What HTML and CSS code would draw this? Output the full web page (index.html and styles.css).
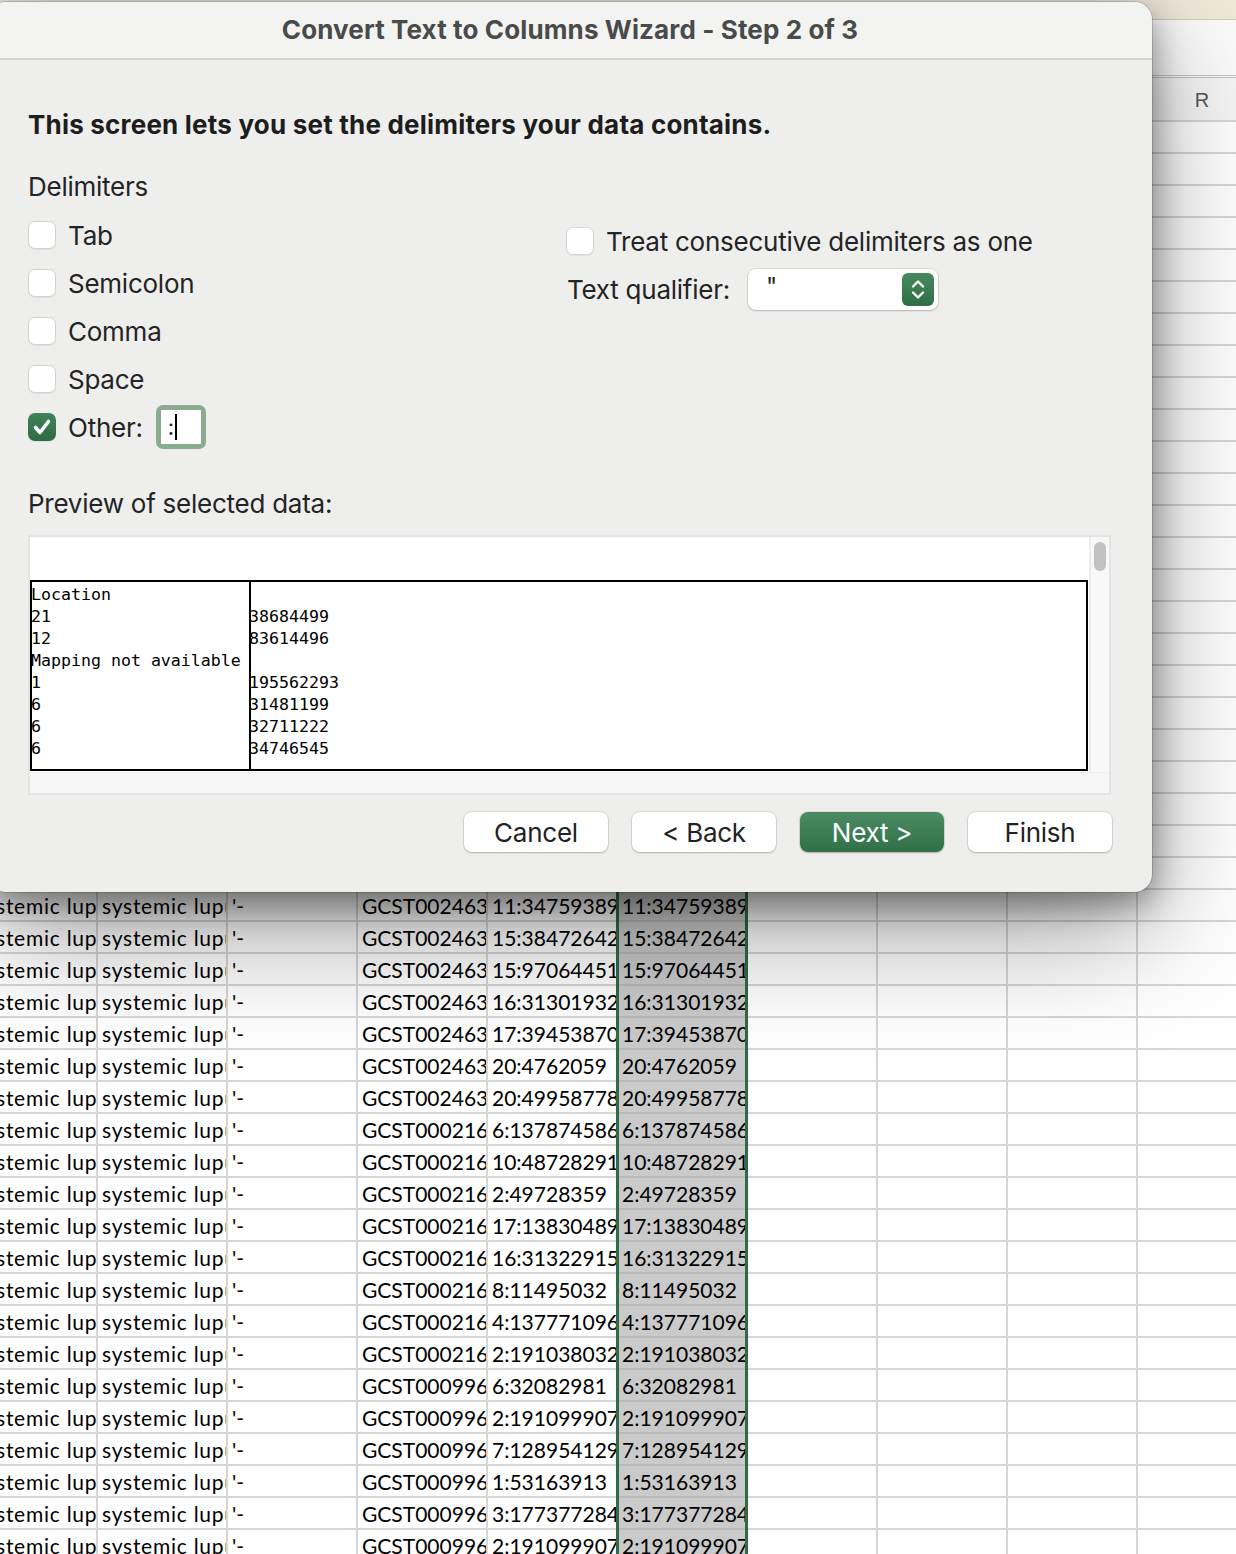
FILE: index.html
```html
<!DOCTYPE html>
<html lang="en">
<head>
<meta charset="utf-8">
<title>Convert Text to Columns Wizard</title>
<link rel="stylesheet" href="styles.css">
</head>
<body>
<div class="app">
  <div class="ribbon"></div>
  <div class="formula"></div>
  <div class="colhdr">
    <span>I</span><span>J</span><span>K</span><span>L</span><span>M</span><span>N</span><span>O</span><span>P</span><span>Q</span><span>R</span>
  </div>
  <div class="sheet">
    <div class="rows-hidden"></div>
    <div class="row"><span>systemic lupus erythematosus</span><span>systemic lupus erythematosus</span><span>'-</span><span>GCST002463</span><span>11:34759389</span><span class="sel">11:34759389</span></div>
    <div class="row"><span>systemic lupus erythematosus</span><span>systemic lupus erythematosus</span><span>'-</span><span>GCST002463</span><span>15:38472642</span><span class="sel">15:38472642</span></div>
    <div class="row"><span>systemic lupus erythematosus</span><span>systemic lupus erythematosus</span><span>'-</span><span>GCST002463</span><span>15:97064451</span><span class="sel">15:97064451</span></div>
    <div class="row"><span>systemic lupus erythematosus</span><span>systemic lupus erythematosus</span><span>'-</span><span>GCST002463</span><span>16:31301932</span><span class="sel">16:31301932</span></div>
    <div class="row"><span>systemic lupus erythematosus</span><span>systemic lupus erythematosus</span><span>'-</span><span>GCST002463</span><span>17:39453870</span><span class="sel">17:39453870</span></div>
    <div class="row"><span>systemic lupus erythematosus</span><span>systemic lupus erythematosus</span><span>'-</span><span>GCST002463</span><span>20:4762059</span><span class="sel">20:4762059</span></div>
    <div class="row"><span>systemic lupus erythematosus</span><span>systemic lupus erythematosus</span><span>'-</span><span>GCST002463</span><span>20:49958778</span><span class="sel">20:49958778</span></div>
    <div class="row"><span>systemic lupus erythematosus</span><span>systemic lupus erythematosus</span><span>'-</span><span>GCST000216</span><span>6:137874586</span><span class="sel">6:137874586</span></div>
    <div class="row"><span>systemic lupus erythematosus</span><span>systemic lupus erythematosus</span><span>'-</span><span>GCST000216</span><span>10:48728291</span><span class="sel">10:48728291</span></div>
    <div class="row"><span>systemic lupus erythematosus</span><span>systemic lupus erythematosus</span><span>'-</span><span>GCST000216</span><span>2:49728359</span><span class="sel">2:49728359</span></div>
    <div class="row"><span>systemic lupus erythematosus</span><span>systemic lupus erythematosus</span><span>'-</span><span>GCST000216</span><span>17:13830489</span><span class="sel">17:13830489</span></div>
    <div class="row"><span>systemic lupus erythematosus</span><span>systemic lupus erythematosus</span><span>'-</span><span>GCST000216</span><span>16:31322915</span><span class="sel">16:31322915</span></div>
    <div class="row"><span>systemic lupus erythematosus</span><span>systemic lupus erythematosus</span><span>'-</span><span>GCST000216</span><span>8:11495032</span><span class="sel">8:11495032</span></div>
    <div class="row"><span>systemic lupus erythematosus</span><span>systemic lupus erythematosus</span><span>'-</span><span>GCST000216</span><span>4:137771096</span><span class="sel">4:137771096</span></div>
    <div class="row"><span>systemic lupus erythematosus</span><span>systemic lupus erythematosus</span><span>'-</span><span>GCST000216</span><span>2:191038032</span><span class="sel">2:191038032</span></div>
    <div class="row"><span>systemic lupus erythematosus</span><span>systemic lupus erythematosus</span><span>'-</span><span>GCST000996</span><span>6:32082981</span><span class="sel">6:32082981</span></div>
    <div class="row"><span>systemic lupus erythematosus</span><span>systemic lupus erythematosus</span><span>'-</span><span>GCST000996</span><span>2:191099907</span><span class="sel">2:191099907</span></div>
    <div class="row"><span>systemic lupus erythematosus</span><span>systemic lupus erythematosus</span><span>'-</span><span>GCST000996</span><span>7:128954129</span><span class="sel">7:128954129</span></div>
    <div class="row"><span>systemic lupus erythematosus</span><span>systemic lupus erythematosus</span><span>'-</span><span>GCST000996</span><span>1:53163913</span><span class="sel">1:53163913</span></div>
    <div class="row"><span>systemic lupus erythematosus</span><span>systemic lupus erythematosus</span><span>'-</span><span>GCST000996</span><span>3:177377284</span><span class="sel">3:177377284</span></div>
    <div class="row"><span>systemic lupus erythematosus</span><span>systemic lupus erythematosus</span><span>'-</span><span>GCST000996</span><span>2:191099907</span><span class="sel">2:191099907</span></div>
  </div>

  <div class="dialog">
    <div class="dlg-title">Convert Text to Columns Wizard - Step 2 of 3</div>
    <div class="dlg-body">
      <div class="dlg-heading">This screen lets you set the delimiters your data contains.</div>
      <div class="group-label">Delimiters</div>
      <div class="options">
        <div class="opt-col">
          <div class="check-row"><span class="cb"></span><span>Tab</span></div>
          <div class="check-row"><span class="cb"></span><span>Semicolon</span></div>
          <div class="check-row"><span class="cb"></span><span>Comma</span></div>
          <div class="check-row"><span class="cb"></span><span>Space</span></div>
          <div class="check-row">
            <span class="cb checked"><svg width="28" height="28" viewBox="0 0 28 28"><path d="M7.5 14.5 L12 19.5 L20.5 8.5" fill="none" stroke="#fff" stroke-width="3.6" stroke-linecap="round" stroke-linejoin="round"/></svg></span>
            <span>Other:</span>
            <span class="other-input"><span class="other-field">:<span class="caret"></span></span></span>
          </div>
        </div>
        <div class="opt-col right">
          <div class="check-row"><span class="cb"></span><span>Treat consecutive delimiters as one</span></div>
          <div class="qual-row">
            <span>Text qualifier:</span>
            <div class="select">
              <span class="select-val">"</span>
              <span class="stepper"><svg width="32" height="33" viewBox="0 0 32 33"><path d="M11 13.5 L16 8.5 L21 13.5" fill="none" stroke="#fff" stroke-width="2.4" stroke-linecap="round" stroke-linejoin="round"/><path d="M11 19.5 L16 24.5 L21 19.5" fill="none" stroke="#fff" stroke-width="2.4" stroke-linecap="round" stroke-linejoin="round"/></svg></span>
            </div>
          </div>
        </div>
      </div>
      <div class="preview-label">Preview of selected data:</div>
      <div class="preview">
        <div class="preview-main">
          <div class="preview-view">
            <div class="ptable">
              <div class="pcol first">Location<br>21<br>12<br>Mapping not available<br>1<br>6<br>6<br>6</div>
              <div class="pcol second"><span class="ptext"><br>38684499<br>83614496<br><br>195562293<br>31481199<br>32711222<br>34746545</span></div>
            </div>
          </div>
          <div class="vscroll"><div class="thumb"></div></div>
        </div>
        <div class="hscroll"></div>
      </div>
      <div class="buttons">
        <div class="btn">Cancel</div>
        <div class="btn">&lt; Back</div>
        <div class="btn primary">Next &gt;</div>
        <div class="btn">Finish</div>
      </div>
    </div>
  </div>
</div>
</body>
</html>
```

FILE: styles.css
```css
* { box-sizing: border-box; }
html, body { margin: 0; padding: 0; }
body {
  width: 1236px;
  height: 1554px;
  overflow: hidden;
  background: #ffffff;
  font-family: Inter, "Noto Sans", sans-serif;
}
.app {
  position: relative;
  width: 1236px;
  height: 1554px;
  overflow: hidden;
  background: #ffffff;
}

/* ---------- spreadsheet ---------- */
.ribbon {
  height: 20px;
  background: #efe9da;
  border-bottom: 1px solid #d2cbb9;
}
.formula {
  height: 58px;
  background: #fbfbfb;
  border-bottom: 3px double #c4c4c4;
}
.colhdr {
  display: grid;
  grid-template-columns: repeat(10, 130px);
  margin-left: -34px;
  height: 42px;
  background: #f6f6f6;
}
.colhdr span {
  display: flex;
  align-items: center;
  justify-content: center;
  padding-top: 3px;
  font-family: "Liberation Sans", Arial, sans-serif;
  font-size: 20px;
  color: #555555;
  border-left: 2px solid #d6d6d6;
}
.sheet {
  margin-left: -34px;
  width: 1300px;
  background-image:
    linear-gradient(#d6d6d6 2px, transparent 2px),
    linear-gradient(90deg, #d6d6d6 2px, transparent 2px);
  background-size: 130px 32px;
}
.rows-hidden { height: 768px; }
.row {
  display: grid;
  grid-template-columns: repeat(10, 130px);
  height: 32px;
}
.row span {
  padding: 2px 0 0 6px;
  line-height: 31px;
  font-family: Lato, "Liberation Sans", sans-serif;
  font-size: 21px;
  color: #000000;
  white-space: nowrap;
  overflow: hidden;
}
.row span:nth-child(-n+2) { letter-spacing: 0.75px; }
.row span:first-child { padding-left: 9px; }
.row .sel {
  margin-right: -2px;
  padding-left: 3px;
  background: linear-gradient(#b9b9b9 2px, #cacaca 2px);
  border-left: 3px solid #2f6b45;
  border-right: 3px solid #2f6b45;
}

/* ---------- dialog ---------- */
.dialog {
  position: absolute;
  left: -12px;
  top: 2px;
  width: 1164px;
  height: 890px;
  background: #eeeeed;
  border-radius: 18px;
  overflow: hidden;
  box-shadow:
    0 0 0 1px rgba(0, 0, 0, 0.14),
    0 12px 34px rgba(0, 0, 0, 0.42),
    0 40px 120px rgba(0, 0, 0, 0.38);
  color: #242424;
}
.dlg-title {
  height: 58px;
  background: #f3f3f2;
  border-bottom: 2px solid #d4d4d3;
  display: flex;
  align-items: center;
  justify-content: center;
  font-size: 26px;
  font-weight: 700;
  letter-spacing: 0.12px;
  color: #4a4a4a;
  padding-bottom: 2px;
}
.dlg-body {
  padding: 49px 41px 0 40px;
  display: flex;
  flex-direction: column;
  letter-spacing: -0.25px;
}
.dlg-heading {
  font-size: 26px;
  font-weight: 700;
  line-height: 32px;
  letter-spacing: 0.2px;
  color: #1d1d1d;
}
.group-label {
  margin-top: 30px;
  font-size: 26px;
  line-height: 32px;
}
.options {
  margin-top: 8px;
  display: grid;
  grid-template-columns: 538px 1fr;
}
.opt-col.right { padding-top: 6px; }
.check-row {
  height: 48px;
  display: flex;
  align-items: center;
  gap: 12px;
  font-size: 26px;
}
.cb {
  width: 28px;
  height: 28px;
  flex: none;
  border-radius: 7px;
  background: #ffffff;
  border: 1px solid #d3d3d3;
  box-shadow: 0 1px 1px rgba(0, 0, 0, 0.06);
}
.cb.checked {
  border: none;
  background: linear-gradient(#3f8559, #2d6b45);
}
.cb svg { display: block; }
.other-input {
  margin-left: 1px;
  width: 50px;
  height: 44px;
  border-radius: 7px;
  background: #8aab8e;
  padding: 5px;
}
.other-field {
  display: flex;
  align-items: center;
  width: 100%;
  height: 100%;
  background: #ffffff;
  padding-left: 7px;
  font-size: 22px;
  line-height: 1;
  color: #222;
}
.caret {
  display: inline-block;
  width: 2px;
  height: 26px;
  margin-left: 1px;
  background: #000000;
}
.qual-row {
  height: 48px;
  display: flex;
  align-items: center;
  gap: 18px;
  font-size: 26px;
  padding-left: 1px;
}
.select {
  position: relative;
  width: 190px;
  height: 41px;
  background: #ffffff;
  border-radius: 8px;
  box-shadow: 0 0 0 1px rgba(0, 0, 0, 0.08), 0 1px 2px rgba(0, 0, 0, 0.18);
  display: flex;
  align-items: center;
  justify-content: space-between;
  padding: 0 4px 0 18px;
}
.select-val {
  font-size: 24px;
  line-height: 1;
  margin-top: -4px;
}
.stepper {
  width: 32px;
  height: 33px;
  border-radius: 6px;
  background: linear-gradient(#468a5f, #2f6e47);
}
.stepper svg { display: block; }
.preview-label {
  margin-top: 37px;
  font-size: 26px;
  line-height: 32px;
}
.preview {
  margin-top: 15px;
  height: 260px;
  border: 2px solid #e4e4e4;
  background: #f7f7f7;
  display: flex;
  flex-direction: column;
}
.preview-main {
  height: 235px;
  display: flex;
}
.preview-view {
  width: 1059px;
  background: #ffffff;
}
.ptable {
  margin-top: 43px;
  width: 1058px;
  height: 191px;
  border: 2px solid #000000;
  display: grid;
  grid-template-columns: 217px 1fr;
  padding-top: 2px;
  font-family: "DejaVu Sans Mono", monospace;
  font-size: 16.6px;
  line-height: 22px;
  letter-spacing: 0;
  color: #000000;
}
.pcol { white-space: nowrap; }
.pcol.first { margin-left: -1px; }
.pcol.second { border-left: 2px solid #000000; margin-top: -2px; padding-top: 2px; }
.ptext { display: block; margin-left: -2px; }
.vscroll {
  flex: 1;
  border-left: 2px solid #ececec;
  background: #f8f8f8;
  padding: 5px 0 0 3px;
}
.thumb {
  width: 12px;
  height: 29px;
  border-radius: 6px;
  background: #c2c2c2;
}
.hscroll {
  flex: 1;
  background: #f6f6f6;
  border-top: 1px solid #efefef;
}
.buttons {
  margin-top: 17px;
  margin-right: -1px;
  display: flex;
  justify-content: flex-end;
  gap: 24px;
}
.btn {
  width: 144px;
  height: 40px;
  border-radius: 8px;
  background: #ffffff;
  box-shadow: 0 0 0 1px rgba(0, 0, 0, 0.07), 0 1px 2px rgba(0, 0, 0, 0.2);
  display: flex;
  align-items: center;
  justify-content: center;
  font-size: 26px;
  color: #222222;
}
.btn.primary {
  background: linear-gradient(#4b8c64, #2f7048);
  color: #ffffff;
}
```
